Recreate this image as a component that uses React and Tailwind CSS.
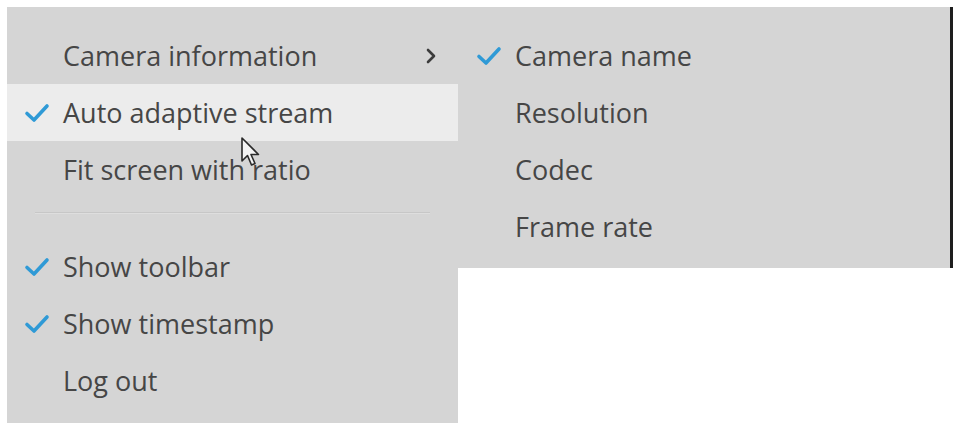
import React from 'react';

const Check = () => (
  <svg width="26" height="22" viewBox="0 0 26 22" className="shrink-0">
    <path d="M3 11.5 L10 18 L23 4" fill="none" stroke="#2f9ad6" strokeWidth="3.6" strokeLinecap="round" strokeLinejoin="round" />
  </svg>
);

const Row = ({ label, checked, active, chevron, indent = 'pl-[17px]' }) => (
  <div className={`relative flex items-center h-[57px] ${indent} pr-[20px] ${active ? 'bg-[#ececec]' : ''}`}>
    <div className="w-[39px] flex items-center">{checked && <Check />}</div>
    <span className="text-[27px] text-[#464646] leading-none">{label}</span>
    {chevron && (
      <svg width="12" height="18" viewBox="0 0 12 18" className="ml-auto mr-[1px]">
        <path d="M3 3 L9 9 L3 15" fill="none" stroke="#3c3c3c" strokeWidth="2.6" strokeLinecap="round" strokeLinejoin="round" />
      </svg>
    )}
  </div>
);

export default function App() {
  return (
    <div className="relative w-[957px] h-[423px] bg-white overflow-hidden flex pt-[7px] pl-[7px]" style={{ fontFamily: '"Open Sans", "Noto Sans", sans-serif' }}>
      {/* main menu */}
      <div className="w-[451px] bg-[#d5d5d5] pt-[20px] flex flex-col">
        <Row label="Camera information" chevron />
        <Row label="Auto adaptive stream" checked active />
        <Row label="Fit screen with ratio" />
        <div className="mx-[28px] mt-[14px] mb-[24px] h-[2px] bg-[#c7c7c7] border-b border-[#dedede]" />
        <Row label="Show toolbar" checked />
        <Row label="Show timestamp" checked />
        <Row label="Log out" />
      </div>

      {/* sub menu */}
      <div className="w-[495px] h-[261px] bg-[#d5d5d5] border-r-[3px] border-[#1e1e1e] pt-[20px] flex flex-col">
        <Row label="Camera name" checked indent="pl-[18px]" />
        <Row label="Resolution" indent="pl-[18px]" />
        <Row label="Codec" indent="pl-[18px]" />
        <Row label="Frame rate" indent="pl-[18px]" />
      </div>

      {/* mouse cursor */}
      <svg className="absolute left-[240px] top-[136px]" width="22" height="32" viewBox="0 0 22 32">
        <path d="M2 2 L2 25 L7.5 19.5 L11.5 29 L15 27.5 L11 18.5 L18.5 18.5 Z" fill="#f4f4f4" stroke="#2a2a2a" strokeWidth="1.6" strokeLinejoin="round" />
      </svg>
    </div>
  );
}
